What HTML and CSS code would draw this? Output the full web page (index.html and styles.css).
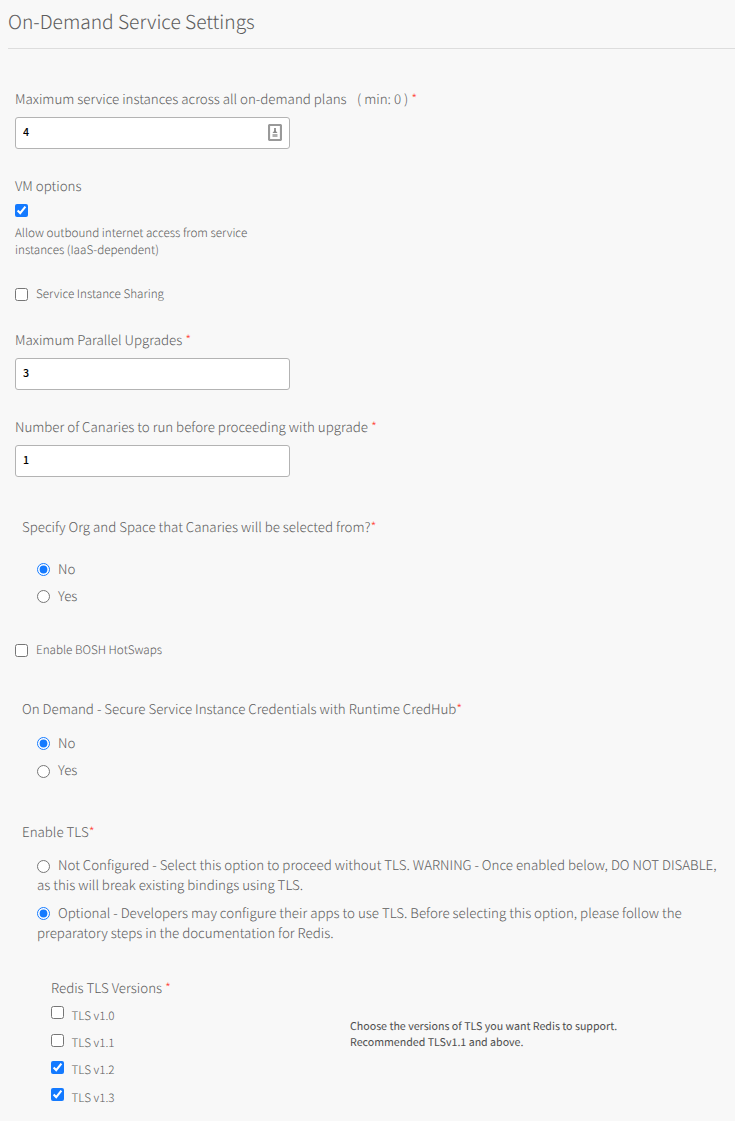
FILE: index.html
```html
<!DOCTYPE html>
<html lang="en">
<head>
<meta charset="utf-8">
<title>On-Demand Service Settings</title>
<link rel="stylesheet" href="styles.css">
</head>
<body>
<main class="page">
  <h1 class="title"><span>On-Demand Service Settings</span></h1>
  <form class="form">
    <section class="field first">
      <label class="label"><span>Maximum service instances across all on-demand plans</span><span class="constraint">( min: 0 )</span><b class="req">*</b></label>
      <div class="control">
        <input class="text" type="text" value="4">
        <svg class="autofill" width="14" height="17" viewBox="0 0 14 17"><rect x="1" y="1" width="12" height="15" rx="1" fill="#fff" stroke="#999" stroke-width="2.200"/><path d="M7 4v3" stroke="#999" stroke-width="2"/><path d="M4.500 9L7 6l2.500 3z" fill="#888"/><path d="M4.500 11.500h5" stroke="#b0b0b0" stroke-width="3"/></svg>
      </div>
    </section>
    <section class="field vm">
      <div class="label"><span>VM options</span></div>
      <input class="box" type="checkbox" checked>
      <p class="hint"><span>Allow outbound internet access from service</span><br><span>instances (IaaS-dependent)</span></p>
    </section>
    <label class="check sharing"><input class="box" type="checkbox"><span>Service Instance Sharing</span></label>
    <section class="field parallel">
      <label class="label"><span>Maximum Parallel Upgrades</span><b class="req">*</b></label>
      <div class="control"><input class="text" type="text" value="3"></div>
    </section>
    <section class="field canaries">
      <label class="label"><span>Number of Canaries to run before proceeding with upgrade</span><b class="req">*</b></label>
      <div class="control"><input class="text" type="text" value="1"></div>
    </section>
    <section class="group org">
      <div class="label tight"><span>Specify Org and Space that Canaries will be selected from?</span><b class="req">*</b></div>
      <div class="options">
        <label class="option"><input class="dot" type="radio" name="org" checked><span>No</span></label>
        <label class="option"><input class="dot" type="radio" name="org"><span>Yes</span></label>
      </div>
    </section>
    <label class="check swaps"><input class="box" type="checkbox"><span>Enable BOSH HotSwaps</span></label>
    <section class="group credhub">
      <div class="label tight"><span>On Demand - Secure Service Instance Credentials with Runtime CredHub</span><b class="req">*</b></div>
      <div class="options">
        <label class="option"><input class="dot" type="radio" name="cred" checked><span>No</span></label>
        <label class="option"><input class="dot low" type="radio" name="cred"><span>Yes</span></label>
      </div>
    </section>
    <section class="group tls">
      <div class="label tight"><span>Enable TLS</span><b class="req">*</b></div>
      <div class="options">
        <label class="option long"><input class="dot low" type="radio" name="tls"><span>Not Configured - Select this option to proceed without TLS. WARNING - Once enabled below, DO NOT DISABLE,</span><br><span>as this will break existing bindings using TLS.</span></label>
        <label class="option long"><input class="dot" type="radio" name="tls" checked><span>Optional - Developers may configure their apps to use TLS. Before selecting this option, please follow the</span><br><span>preparatory steps in the documentation for Redis.</span></label>
      </div>
    </section>
    <section class="versions">
      <div class="version-list">
        <div class="label"><span>Redis TLS Versions</span><b class="req">*</b></div>
        <label class="version"><input class="box" type="checkbox"><span>TLS v1.0</span></label>
        <label class="version"><input class="box" type="checkbox"><span>TLS v1.1</span></label>
        <label class="version"><input class="box" type="checkbox" checked><span>TLS v1.2</span></label>
        <label class="version"><input class="box" type="checkbox" checked><span>TLS v1.3</span></label>
      </div>
      <p class="help"><span>Choose the versions of TLS you want Redis to support.</span><br><span>Recommended TLSv1.1 and above.</span></p>
    </section>
  </form>
</main>
</body>
</html>
```
FILE: styles.css
```css
* { box-sizing: border-box; }
body {
  margin: 0;
  background: #f8f8f8;
  color: #5c5c5c;
  font-family: "Noto Sans CJK SC", "Noto Sans", sans-serif;
  font-weight: 300;
  font-size: 13.33px;
  line-height: 20px;
  text-rendering: geometricPrecision;
}
.page { height: 1121px; overflow: hidden; white-space: nowrap; }
.title {
  margin: 0 0 0 8px;
  height: 49px;
  padding-top: 6px;
  border-bottom: 1px solid #ddd;
  font-size: 19.2px;
  font-weight: 300;
  line-height: 30px;
}
.form { padding: 39px 0 0 15px; }
.label { display: flex; height: 20px; padding-top: 1px; }
.constraint { margin-left: 10.5px; }
.req { margin-left: 3px; color: #ff4a40; font-weight: 300; }
.tight .req { margin-left: 0; }
.control { position: relative; width: 275px; height: 32px; margin-top: 9px; }
.text {
  display: block;
  width: 275px;
  height: 32px;
  padding: 0 7px 3px;
  border: 1px solid #b3b3b3;
  border-radius: 3px;
  background: #fff;
  color: #000;
  font: 500 10.7px "Noto Sans CJK SC", "Noto Sans", sans-serif;
}
.autofill { position: absolute; left: 253px; top: 7px; }
.box, .dot { width: 13px; height: 13px; margin: 0; accent-color: #147aff; }
.vm { margin-top: 26px; }
.vm .box { display: block; margin-top: 9px; }
.hint { margin: 7px 0 0; font-size: 11.68px; line-height: 17px; }
.check { display: flex; gap: 8px; height: 17px; font-size: 11.68px; line-height: 17px; }
.check .box { margin-top: 3px; }
.sharing { margin-top: 27px; }
.parallel { margin-top: 27px; }
.canaries { margin-top: 26px; }
.group { padding-left: 7px; }
.org { margin-top: 39px; }
.options { display: flex; flex-direction: column; gap: 7px; padding-left: 15px; margin-top: 13px; }
.org .options { margin-top: 22px; }
.credhub .options { margin-top: 14px; }
.option { display: flex; gap: 8px; height: 20px; padding-top: 1px; }
.option .dot { margin-top: 4px; }
.option .low { margin-top: 5px; }
.long { display: block; height: 40px; }
.long .dot { float: left; margin-right: 8px; }
.options:has(.long) { gap: 8px; }
.swaps { margin-top: 36px; }
.credhub { margin-top: 40px; }
.tls { margin-top: 42px; }
.versions { display: flex; padding-left: 36px; margin-top: 35px; }
.version-list { width: 299px; }
.version { display: flex; gap: 7.5px; height: 17px; font-size: 11.68px; line-height: 17px; margin-bottom: 10px; }
.version-list .label { margin-bottom: 9px; }
.version:nth-of-type(1) { margin-bottom: 11px; }
.version span { margin-top: 1px; }
.version:nth-of-type(2) span, .version:nth-of-type(3) span { margin-top: 0; }
.help { margin: 42px 0 0; font-size: 10.65px; font-weight: 400; line-height: 16px; color: #4d4d4d; }
```
